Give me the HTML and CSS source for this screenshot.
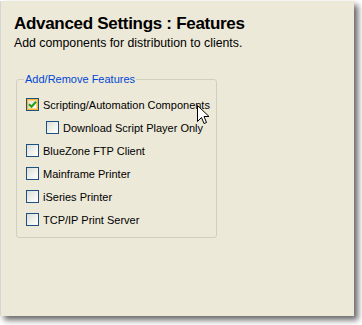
FILE: index.html
```html
<!DOCTYPE html>
<html>
<head>
<meta charset="utf-8">
<link rel="stylesheet" href="styles.css">
</head>
<body>
<div class="panel">
  <h1 class="title">Advanced Settings : Features</h1>
  <p class="subtitle">Add components for distribution to clients.</p>
  <fieldset class="group">
    <legend class="legend">Add/Remove Features</legend>
    <div class="row">
      <span class="box hover"><svg width="9" height="9" viewBox="0 0 9 9"><path d="M1 4.2 L3.5 6.7 L8 1.8" fill="none" stroke="#21a121" stroke-width="2.2"/></svg></span>
      <span class="label">Scripting/Automation Components</span>
    </div>
    <div class="row sub">
      <span class="box"></span>
      <span class="label">Download Script Player Only</span>
    </div>
    <div class="row">
      <span class="box"></span>
      <span class="label">BlueZone FTP Client</span>
    </div>
    <div class="row">
      <span class="box"></span>
      <span class="label">Mainframe Printer</span>
    </div>
    <div class="row">
      <span class="box"></span>
      <span class="label">iSeries Printer</span>
    </div>
    <div class="row">
      <span class="box"></span>
      <span class="label">TCP/IP Print Server</span>
    </div>
  </fieldset>
  <svg class="cursor" width="13" height="21" viewBox="0 0 13 21"><path d="M0.5 0.5 L0.5 16.5 L4.5 12.5 L7 18.5 L9.5 17.5 L7 11.5 L12 11.5 Z" fill="#fff" stroke="#000" stroke-width="1"/></svg>
</div>
</body>
</html>
```
FILE: styles.css
```css
html, body {
  margin: 0;
  padding: 0;
  background: #ffffff;
}
body {
  width: 362px;
  height: 325px;
  overflow: hidden;
}
.panel {
  position: relative;
  box-sizing: border-box;
  width: 354px;
  height: 315px;
  margin: 1px 0 0 0;
  background: #ece9d8;
  border-left: 1px solid #d6d6d6;
  box-shadow: 4px 4px 6px rgba(0,0,0,0.6);
  padding: 13px 0 0 13px;
}
.title {
  margin: 0;
  font-family: "Liberation Sans", Arial, sans-serif;
  font-weight: bold;
  font-size: 17px;
  letter-spacing: -0.3px;
  line-height: 20px;
  color: #000;
}
.subtitle {
  margin: 2px 0 0 0;
  font-family: "Liberation Sans", Arial, sans-serif;
  font-size: 12.3px;
  line-height: 15px;
  color: #000;
}
.group {
  margin: 23px 0 0 2px;
  width: 201px;
  box-sizing: border-box;
  border: 1px solid #d0d0bf;
  border-radius: 3px;
  padding: 8px 0 6px 9px;
  min-width: 0;
}
.legend {
  font-family: "Liberation Sans", Arial, sans-serif;
  font-size: 11px;
  line-height: 11px;
  color: #0046d5;
  padding: 0 1px;
  margin-left: -2px;
}
.row {
  display: flex;
  align-items: center;
  height: 23px;
  gap: 4px;
}
.row.sub {
  margin-left: 20px;
}
.box {
  box-sizing: border-box;
  width: 13px;
  height: 13px;
  border: 1px solid #1c5180;
  background: linear-gradient(135deg, #dcdcd7 0%, #f3f3f0 60%, #ffffff 100%);
  display: flex;
  align-items: center;
  justify-content: center;
}
.box.hover {
  box-shadow: inset 0 0 0 1px #f8b636, inset 0 0 0 2px #fdd889;
}
.label {
  font-family: "Liberation Sans", Arial, sans-serif;
  font-size: 11px;
  color: #000;
  white-space: nowrap;
}
.cursor {
  position: absolute;
  left: 196px;
  top: 104px;
}
```
